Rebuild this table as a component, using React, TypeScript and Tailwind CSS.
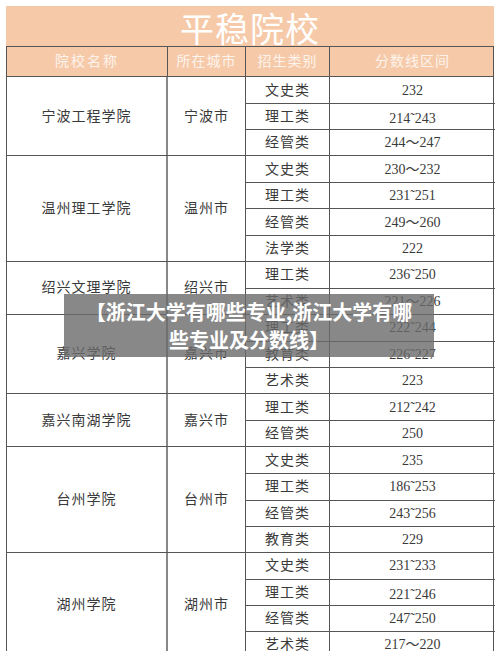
import React from "react";

type Row = { type: string; score: string; low?: boolean };
type School = { name: string; city: string; rows: Row[] };

const schools: School[] = [
  {
    name: "宁波工程学院",
    city: "宁波市",
    rows: [
      { type: "文史类", score: "232" },
      { type: "理工类", score: "214˜243", low: true },
      { type: "经管类", score: "244～247" },
    ],
  },
  {
    name: "温州理工学院",
    city: "温州市",
    rows: [
      { type: "文史类", score: "230～232" },
      { type: "理工类", score: "231˜251" },
      { type: "经管类", score: "249～260" },
      { type: "法学类", score: "222" },
    ],
  },
  {
    name: "绍兴文理学院",
    city: "绍兴市",
    rows: [
      { type: "理工类", score: "236˜250" },
      { type: "艺术类", score: "221～226" },
    ],
  },
  {
    name: "嘉兴学院",
    city: "嘉兴市",
    rows: [
      { type: "理工类", score: "222˜244" },
      { type: "教育类", score: "226˜227" },
      { type: "艺术类", score: "223" },
    ],
  },
  {
    name: "嘉兴南湖学院",
    city: "嘉兴市",
    rows: [
      { type: "理工类", score: "212˜242" },
      { type: "经管类", score: "250" },
    ],
  },
  {
    name: "台州学院",
    city: "台州市",
    rows: [
      { type: "文史类", score: "235" },
      { type: "理工类", score: "186˜253" },
      { type: "经管类", score: "243˜256" },
      { type: "教育类", score: "229" },
    ],
  },
  {
    name: "湖州学院",
    city: "湖州市",
    rows: [
      { type: "文史类", score: "231˜233" },
      { type: "理工类", score: "221˜246", low: true },
      { type: "经管类", score: "247˜250" },
      { type: "艺术类", score: "217～220" },
    ],
  },
];

const serif = "font-['Liberation_Serif','Noto_Sans_CJK_SC',serif]";

export default function App() {
  return (
    <div className="relative w-[500px] h-[651px] overflow-hidden bg-white pl-[6px] pt-[6px]">
      <div className="w-[488px]">
        <div className="h-[40px] bg-[#f6caa9] flex items-center justify-center pt-[3px] text-white text-[34px] leading-none font-['Noto_Sans_CJK_SC',sans-serif] tracking-[1px]">
          平稳院校
        </div>
        <div
          className={`grid grid-cols-[161px_78px_84px_165px] h-[30px] bg-[#f6caa9] border-t border-l border-r border-[#555] text-[#fdf3ec] text-[14px] ${serif}`}
        >
          <div className="flex items-center justify-center border-r border-[#555] tracking-[2px]">院校名称</div>
          <div className="flex items-center justify-center border-r border-[#555] tracking-[1px]">所在城市</div>
          <div className="flex items-center justify-center border-r border-[#555] tracking-[1px]">招生类别</div>
          <div className="flex items-center justify-center tracking-[1px]">分数线区间</div>
        </div>
        <div className={`border-l border-r border-[#555] text-[#3a3a3a] text-[14px] ${serif}`}>
          {schools.map((s) => (
            <div key={s.name} className="grid grid-cols-[161px_78px_249px] border-t border-[#555]">
              <div className="flex items-center justify-center border-r-2 border-[#888] tracking-[1px]">{s.name}</div>
              <div className="flex items-center justify-center border-r border-[#555] tracking-[1px]">{s.city}</div>
              <div className="flex flex-col">
                {s.rows.map((r, i) => (
                  <div
                    key={r.type + i}
                    className={`grid grid-cols-[84px_165px] h-[26.1px] ${i > 0 ? "border-t border-[#555]" : ""}`}
                  >
                    <div className="flex items-center justify-center border-r border-[#555] tracking-[1px]">{r.type}</div>
                    <div className={`flex justify-center ${r.low ? "items-end" : "items-center"}`}>{r.score}</div>
                  </div>
                ))}
              </div>
            </div>
          ))}
        </div>
      </div>
      <div className="absolute left-[64px] top-[294px] w-[370px] h-[63px] bg-[#6a6a6a]/80 flex flex-col items-center justify-center text-white font-bold text-[20px] leading-[28px] font-['Noto_Sans_CJK_SC',sans-serif]">
        <span>【浙江大学有哪些专业,浙江大学有哪</span>
        <span>些专业及分数线】</span>
      </div>
    </div>
  );
}
